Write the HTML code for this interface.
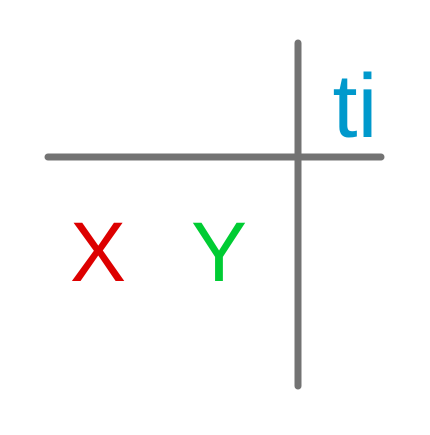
<!DOCTYPE html>
<html><head><style>html,body{margin:0;padding:0;background:#fff;}</style></head>
<body>
<svg width="430" height="430" xmlns="http://www.w3.org/2000/svg">
<rect width="430" height="430" fill="#fff"/>
<line x1="48" y1="157" x2="381" y2="157" stroke="#737373" stroke-width="7" stroke-linecap="round"/>
<line x1="298" y1="43" x2="298" y2="386" stroke="#737373" stroke-width="7" stroke-linecap="round"/>
<text x="98" y="281" font-family="Liberation Sans, sans-serif" font-size="84" fill="#dd0000" text-anchor="middle">X</text>
<text x="219" y="281" font-family="Liberation Sans, sans-serif" font-size="84" fill="#00cc33" text-anchor="middle">Y</text>
<text x="355" y="137" font-family="Liberation Sans, sans-serif" font-size="90" fill="#0099cc" text-anchor="middle">ti</text>
</svg>
</body></html>
